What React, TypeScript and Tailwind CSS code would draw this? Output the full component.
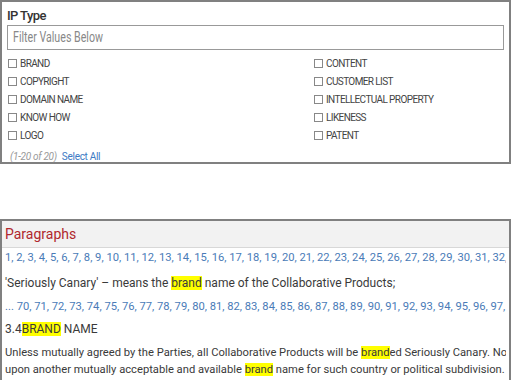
import React from "react";

const leftItems = ["BRAND", "COPYRIGHT", "DOMAIN NAME", "KNOW HOW", "LOGO"];
const rightItems = ["CONTENT", "CUSTOMER LIST", "INTELLECTUAL PROPERTY", "LIKENESS", "PATENT"];

function Hl({ children }: { children: React.ReactNode }) {
  return <span className="bg-[#ffff00]">{children}</span>;
}

function Item({ label }: { label: string }) {
  return (
    <div className="flex items-center h-[18px]">
      <span className="w-[9px] h-[9px] border border-[#888] bg-white mr-[3px]" />
      <span className="text-[10px] tracking-[-0.6px] text-[#444]">{label}</span>
    </div>
  );
}

export default function App() {
  const first = Array.from({ length: 32 }, (_, i) => i + 1).join(", ") + ", 33";
  const second = Array.from({ length: 30 }, (_, i) => i + 70).join(", ");

  return (
    <div className="w-[512px] h-[380px] bg-white overflow-hidden font-['Roboto',sans-serif]">
      {/* filter panel */}
      <div className="w-[511px] h-[164px] border-2 border-[#808080] px-[5px] pt-[5px]">
        <div className="text-[13px] font-medium text-[#333] tracking-[-0.6px] h-[18px] leading-[18px]">IP Type</div>
        <div className="h-[25px] border border-[#999] flex items-center px-[5px] text-[15px] text-[#888]">
          <span className="inline-block origin-left scale-x-[0.71] whitespace-nowrap">Filter Values Below</span>
        </div>
        <div className="flex pt-[4px] pl-[1px]">
          <div className="w-[306px]">
            {leftItems.map((l) => (
              <Item key={l} label={l} />
            ))}
          </div>
          <div>
            {rightItems.map((l) => (
              <Item key={l} label={l} />
            ))}
          </div>
        </div>
        <div className="text-[10px] tracking-[-0.3px] pl-[3px] pt-[5px] h-[16px] leading-[16px]">
          <span className="italic text-[#999]">(1-20 of 20)</span>
          <span className="text-[#3d7ac4] ml-[5px]">Select All</span>
        </div>
      </div>

      {/* paragraphs panel */}
      <div className="mt-[55px] w-[511px] h-[170px] border-2 border-[#808080] text-[12px] text-[#3a3a3a]">
        <div className="h-[27px] bg-[#f2f2f2] border-b border-[#d8d8d8] px-[3px] flex items-center text-[14px] text-[#b0272d]">
          Paragraphs
        </div>
        <div className="px-[3px]">
          <div className="whitespace-nowrap overflow-hidden text-[11.2px] text-[#4a7bb7] leading-[23px] h-[23px] mt-[-2px]">{first}</div>
          <div className="whitespace-nowrap leading-[23px] h-[23px] mt-[3px]">
            'Seriously Canary' – means the <Hl>brand</Hl> name of the Collaborative Products;
          </div>
          <div className="whitespace-nowrap overflow-hidden text-[11.2px] text-[#4a7bb7] leading-[23px] h-[23px]">... {second}</div>
          <div className="whitespace-nowrap leading-[23px] h-[23px]">
            3.4<Hl>BRAND</Hl> NAME
          </div>
          <div className="whitespace-nowrap overflow-hidden text-[11.2px] leading-[17px] pt-[3px]">
            Unless mutually agreed by the Parties, all Collaborative Products will be <Hl>brand</Hl>ed Seriously Canary. Notwithstanding
            <br />
            upon another mutually acceptable and available <Hl>brand</Hl> name for such country or political subdivision.
          </div>
        </div>
      </div>
    </div>
  );
}
